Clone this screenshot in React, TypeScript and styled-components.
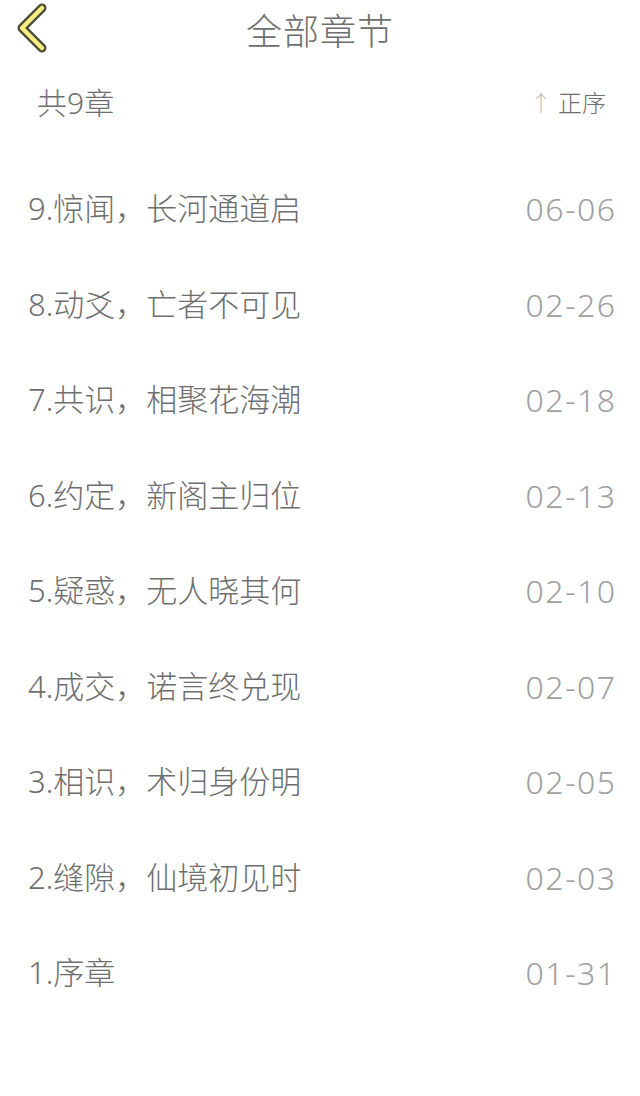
import React from "react";
import styled, { createGlobalStyle } from "styled-components";

const GlobalStyle = createGlobalStyle`
  body {
    margin: 0;
    background: #ffffff;
    font-family: "Noto Sans", "Noto Sans CJK SC", sans-serif;
  }
`;

const StyledPage = styled("div")`
  width: 640px;
  min-height: 1096px;
  background: #ffffff;
`;

const StyledHeader = styled("header")`
  position: relative;
  height: 58px;
  display: flex;
  align-items: center;
  justify-content: center;
`;

const StyledBack = styled("button")`
  position: absolute;
  left: 12px;
  top: 2px;
  width: 44px;
  height: 52px;
  padding: 0;
  border: none;
  background: none;
  cursor: pointer;
`;

const StyledTitle = styled("h1")`
  margin: 0;
  font-size: 36px;
  font-weight: 300;
  color: #6e6e6e;
  letter-spacing: 1px;
`;

const StyledSubHeader = styled("div")`
  height: 86px;
  display: flex;
  align-items: center;
  justify-content: space-between;
  padding: 0 34px 0 37px;
`;

const StyledCount = styled("span")`
  font-size: 30px;
  font-weight: 300;
  color: #6e6e6e;
`;

const StyledSort = styled("span")`
  display: flex;
  align-items: center;
  gap: 6px;
  font-size: 24px;
  font-weight: 300;
  color: #6e6e6e;
`;

const StyledArrow = styled("span")`
  color: #c0c0c0;
  font-size: 22px;
  font-weight: 300;
`;

const StyledList = styled("ul")`
  list-style: none;
  margin: 0;
  padding: 15px 0 0;
`;

const StyledRow = styled("li")`
  height: 95.5px;
  display: flex;
  align-items: center;
  justify-content: space-between;
  padding: 0 25px 0 28px;
`;

const StyledName = styled("span")`
  font-size: 31px;
  font-weight: 300;
  color: #6e6e6e;
`;

const StyledDate = styled("span")`
  font-size: 32px;
  font-weight: 300;
  color: #a0a0a0;
  letter-spacing: 1.5px;
  margin-right: -1.5px;
  padding-top: 4px;
`;

const chapters = [
  { name: "9.惊闻，长河通道启", date: "06-06" },
  { name: "8.动爻，亡者不可见", date: "02-26" },
  { name: "7.共识，相聚花海潮", date: "02-18" },
  { name: "6.约定，新阁主归位", date: "02-13" },
  { name: "5.疑惑，无人晓其何", date: "02-10" },
  { name: "4.成交，诺言终兑现", date: "02-07" },
  { name: "3.相识，术归身份明", date: "02-05" },
  { name: "2.缝隙，仙境初见时", date: "02-03" },
  { name: "1.序章", date: "01-31" },
];

const BackIcon = () => (
  <svg width="44" height="52" viewBox="0 0 44 52">
    <path
      d="M30 6 L10 26 L30 46"
      fill="none"
      stroke="#4a4a3a"
      strokeWidth="9"
      strokeLinecap="round"
      strokeLinejoin="round"
    />
    <path
      d="M30 6 L10 26 L30 46"
      fill="none"
      stroke="#f6ef80"
      strokeWidth="4.5"
      strokeLinecap="round"
      strokeLinejoin="round"
    />
  </svg>
);

const App = () => {
  return (
    <StyledPage>
      <GlobalStyle />
      <StyledHeader>
        <StyledBack aria-label="返回">
          <BackIcon />
        </StyledBack>
        <StyledTitle>全部章节</StyledTitle>
      </StyledHeader>
      <StyledSubHeader>
        <StyledCount>共9章</StyledCount>
        <StyledSort>
          <StyledArrow>↑</StyledArrow>
          正序
        </StyledSort>
      </StyledSubHeader>
      <StyledList>
        {chapters.map((c) => (
          <StyledRow key={c.name}>
            <StyledName>{c.name}</StyledName>
            <StyledDate>{c.date}</StyledDate>
          </StyledRow>
        ))}
      </StyledList>
    </StyledPage>
  );
};

export default App;
